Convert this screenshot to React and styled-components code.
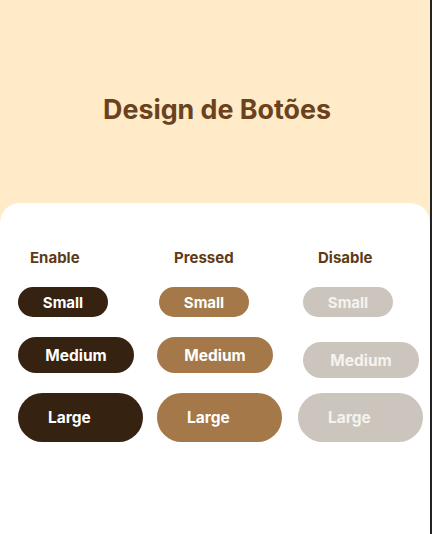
import { Fragment } from "react";
import styled, { createGlobalStyle } from "styled-components";

const GlobalStyle = createGlobalStyle`
  html, body {
    margin: 0;
    padding: 0;
    background: #FFEBC8;
  }
  * {
    box-sizing: border-box;
  }
`;

const Page = styled.div`
  width: 432px;
  height: 534px;
  display: flex;
  flex-direction: column;
  background: #FFEBC8;
  border-right: 2px solid #232323;
  font-family: Inter, "Liberation Sans", sans-serif;
  overflow: hidden;
`;

const Header = styled.header`
  height: 203px;
  display: flex;
  align-items: center;
  justify-content: center;
  padding: 0 0 0 4px;
`;

const Title = styled.h1`
  margin: 14px 0 0;
  font-size: 26.8px;
  font-weight: 700;
  color: #6A4220;
  letter-spacing: 0;
`;

const Card = styled.section`
  flex: 1;
  background: #ffffff;
  border-radius: 20px 20px 0 0;
  padding: 46px 0 0 18px;
`;

const Grid = styled.div`
  display: grid;
  grid-template-columns: 139px 141px 1fr;
  grid-template-rows: 18px 30px 36px 49px;
  row-gap: 20px;
  grid-auto-flow: column;
  align-items: start;
`;

const Label = styled.span`
  font-size: 15px;
  line-height: 18px;
  font-weight: 700;
  color: #5E3B18;
  margin-left: ${(p) => p.$offset}px;
`;

const variants = {
  enable: { bg: "#352211", fg: "#ffffff" },
  pressed: { bg: "#A47848", fg: "#ffffff" },
  disable: { bg: "#CCC5BE", fg: "#F6F3EF" },
};

const sizes = {
  small: { w: 90, h: 30, font: 15, align: "center", pad: 0 },
  medium: { w: 116, h: 36, font: 15.5, align: "center", pad: 0 },
  large: { w: 125, h: 49, font: 15.5, align: "flex-start", pad: 30 },
};

const Button = styled.button`
  display: flex;
  align-items: center;
  justify-content: ${(p) => sizes[p.$size].align};
  width: ${(p) => sizes[p.$size].w}px;
  height: ${(p) => sizes[p.$size].h}px;
  padding: 0 0 0 ${(p) => sizes[p.$size].pad - (p.$shift || 0)}px;
  margin: ${(p) => p.$drop || 0}px 0 0 ${(p) => p.$shift || 0}px;
  border: none;
  border-radius: 999px;
  background: ${(p) => variants[p.$variant].bg};
  color: ${(p) => variants[p.$variant].fg};
  font-family: Inter, "Liberation Sans", sans-serif;
  font-size: ${(p) => sizes[p.$size].font}px;
  font-weight: 700;
  cursor: ${(p) => (p.$variant === "disable" ? "default" : "pointer")};
`;

const columns = [
  { title: "Enable", variant: "enable", label: 12, shifts: { small: 0, medium: 0, large: 0 }, drops: {} },
  { title: "Pressed", variant: "pressed", label: 17, shifts: { small: 2, medium: 0, large: 0 }, drops: {} },
  { title: "Disable", variant: "disable", label: 20, shifts: { small: 5, medium: 5, large: 0 }, drops: { medium: 5 } },
];

const names = { small: "Small", medium: "Medium", large: "Large" };

export default function App() {
  return (
    <>
      <GlobalStyle />
      <Page>
        <Header>
          <Title>Design de Botões</Title>
        </Header>
        <Card>
          <Grid>
            {columns.map((col) => (
              <Fragment key={col.title}>
                <Label $offset={col.label}>{col.title}</Label>
                {["small", "medium", "large"].map((size) => (
                  <Button
                    key={size}
                    $variant={col.variant}
                    $size={size}
                    $shift={col.shifts[size]}
                    $drop={col.drops[size]}
                    disabled={col.variant === "disable"}
                  >
                    {names[size]}
                  </Button>
                ))}
              </Fragment>
            ))}
          </Grid>
        </Card>
      </Page>
    </>
  );
}
